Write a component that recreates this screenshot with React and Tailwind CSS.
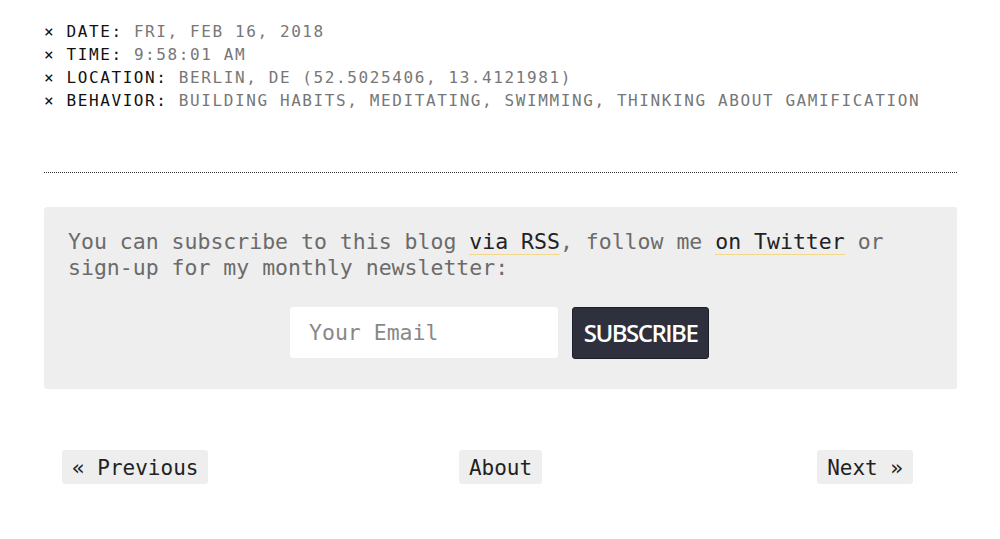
import React from "react";

const mono = { fontFamily: '"DejaVu Sans Mono", "Liberation Mono", monospace' };

const meta = [
  ["DATE", "FRI, FEB 16, 2018"],
  ["TIME", "9:58:01 AM"],
  ["LOCATION", "BERLIN, DE (52.5025406, 13.4121981)"],
  ["BEHAVIOR", "BUILDING HABITS, MEDITATING, SWIMMING, THINKING ABOUT GAMIFICATION"],
];

export default function App() {
  return (
    <div className="min-h-screen bg-white" style={mono}>
      <div className="w-[913px] ml-[44px] pt-[20px]">
        {/* post meta */}
        <ul className="text-[16px] leading-[23px] tracking-[1.6px]">
          {meta.map(([label, value]) => (
            <li key={label} className="whitespace-nowrap">
              <span className="text-[#111]">× {label}:</span>{" "}
              <span className="text-[#777]">{value}</span>
            </li>
          ))}
        </ul>

        <div className="mt-[60px] border-t border-dotted border-[#333]" />

        {/* subscribe box */}
        <div className="mt-[34px] bg-[#eeeeee] rounded-[3px] pt-[22px] pb-[30px] px-[24px]">
          <p className="text-[21.5px] leading-[26px] text-[#6b6b6b]">
            You can subscribe to this blog{" "}
            <a className="text-[#222] border-b border-[#f2d98a]">via RSS</a>, follow me{" "}
            <a className="text-[#222] border-b border-[#f2d98a]">on Twitter</a> or sign-up for my
            monthly newsletter:
          </p>
          <div className="mt-[26px] flex justify-center gap-[14px] pr-[2px]">
            <input
              placeholder="Your Email"
              className="w-[268px] h-[51px] bg-white rounded-[3px] px-[19px] text-[21.5px] placeholder:text-[#888] outline-none"
              style={mono}
            />
            <button
              className="w-[137px] h-[52px] bg-[#2e313d] border border-[#1e2029] rounded-[3px] text-white text-[24px] font-semibold tracking-[-1.5px]"
              style={{ fontFamily: '"Open Sans", "Noto Sans", sans-serif' }}
            >
              SUBSCRIBE
            </button>
          </div>
        </div>

        {/* pagination */}
        <nav className="mt-[61px] grid grid-cols-[1fr_auto_1fr] items-center px-[18px] text-[21px] text-[#222]">
          <div className="flex justify-start">
            <a className="bg-[#eeeeee] rounded-[3px] h-[34px] px-[10px] pt-[3px] flex items-center">« Previous</a>
          </div>
          <a className="bg-[#eeeeee] rounded-[3px] h-[34px] px-[10px] pt-[3px] flex items-center">About</a>
          <div className="flex justify-end pr-[26px]">
            <a className="bg-[#eeeeee] rounded-[3px] h-[34px] px-[10px] pt-[3px] flex items-center">Next »</a>
          </div>
        </nav>
      </div>
    </div>
  );
}
